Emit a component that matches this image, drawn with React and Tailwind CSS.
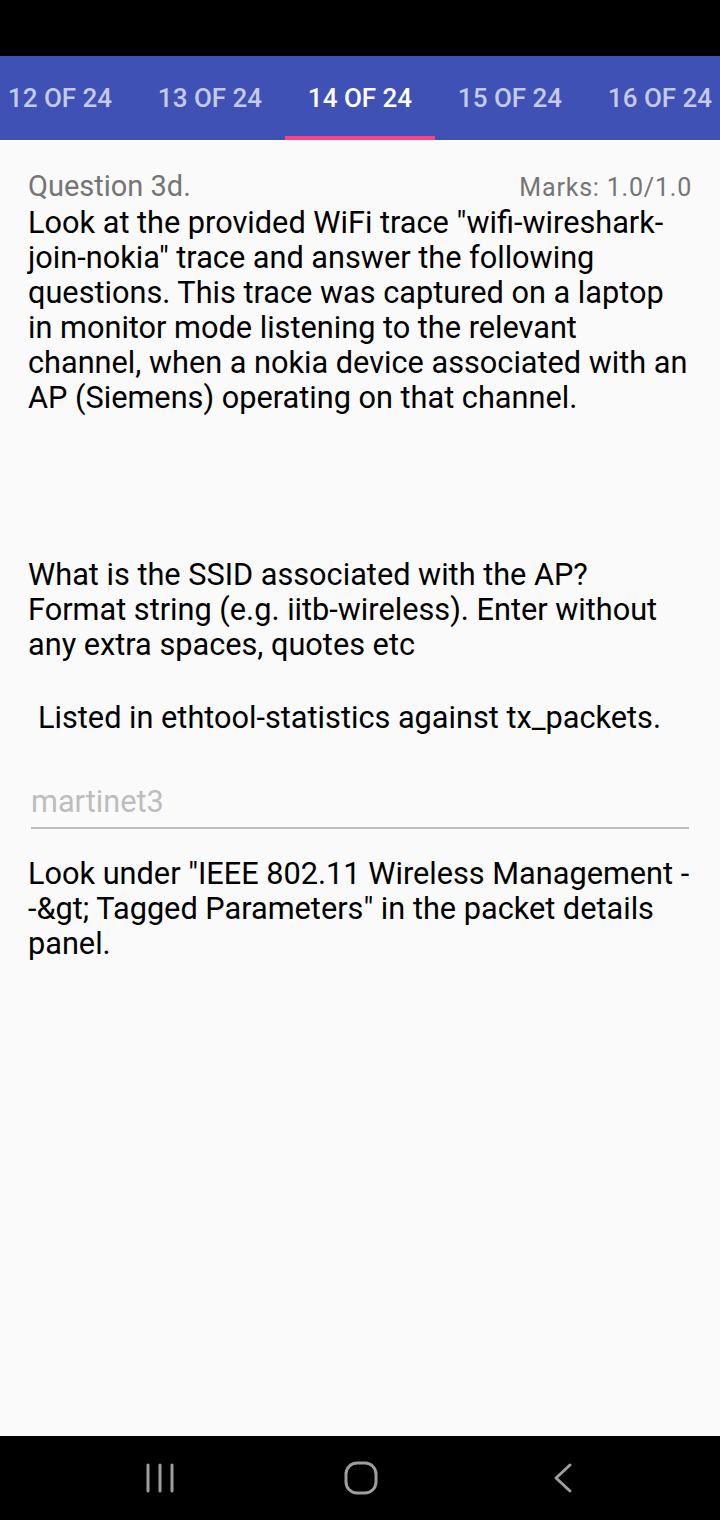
import { useState } from 'react';

const tabs = ['12 OF 24', '13 OF 24', '14 OF 24', '15 OF 24', '16 OF 24'];

export default function App() {
  const [active] = useState(2);

  return (
    <div className="w-[720px] h-[1520px] flex flex-col bg-[#fafafa] overflow-hidden" style={{ fontFamily: 'Roboto, "Noto Sans", sans-serif' }}>
      {/* status bar */}
      <div className="h-[56px] bg-black shrink-0"></div>

      {/* tabs */}
      <div className="h-[84px] bg-[#3f51b5] shrink-0 flex ml-[-15px]">
        {tabs.map((t, i) => (
          <div key={t} className="w-[150px] shrink-0 flex flex-col">
            <div
              className={`flex-1 flex items-center justify-center pt-[4px] text-[26px] font-medium ${
                i === active ? 'text-white' : 'text-[#c5cae9]'
              }`}
            >
              {t}
            </div>
            <div className={`h-[4px] ${i === active ? 'bg-[#ff4081]' : ''}`}></div>
          </div>
        ))}
      </div>

      {/* question body */}
      <div className="flex-1 px-[28px] pt-[30px] text-[30.7px] leading-[35px] text-black">
        <div className="flex justify-between items-baseline leading-[32px] text-[#757575]">
          <span className="text-[29px]">Question 3d.</span>
          <span className="text-[25px] tracking-[0.8px]">Marks: 1.0/1.0</span>
        </div>
        <p className="mt-[1px]">
          Look at the provided WiFi trace "wifi-wireshark-join-nokia" trace and answer the following questions. This
          trace was captured on a laptop in monitor mode listening to the relevant channel, when a nokia device
          associated with an AP (Siemens) operating on that channel.
        </p>

        <p className="mt-[142px]">
          What is the SSID associated with the AP? Format string (e.g. iitb-wireless). Enter without any extra spaces,
          quotes etc
        </p>
        <p className="mt-[38px] pl-[10px]">Listed in ethtool-statistics against tx_packets.</p>

        <div className="mt-[49px] mx-[3px] border-b-2 border-[#bdbdbd] pb-[8px]">
          <span className="text-[#bdbdbd]">martinet3</span>
        </div>

        <p className="mt-[27px]">
          Look under "IEEE 802.11 Wireless Management --&amp;gt; Tagged Parameters" in the packet details panel.
        </p>
      </div>

      {/* nav bar */}
      <div className="h-[84px] bg-black shrink-0 flex items-center pl-[140px] gap-[161px]">
        <svg width="40" height="40" viewBox="0 0 40 40">
          <g stroke="#9e9e9e" strokeWidth="3" strokeLinecap="round">
            <line x1="8" y1="7" x2="8" y2="33" />
            <line x1="20" y1="7" x2="20" y2="33" />
            <line x1="32" y1="7" x2="32" y2="33" />
          </g>
        </svg>
        <svg width="40" height="40" viewBox="0 0 40 40">
          <rect x="5" y="5" width="30" height="30" rx="11" fill="none" stroke="#9e9e9e" strokeWidth="3" />
        </svg>
        <svg width="40" height="40" viewBox="0 0 40 40">
          <polyline points="28,7 14,20 28,33" fill="none" stroke="#9e9e9e" strokeWidth="3" strokeLinecap="round" strokeLinejoin="round" />
        </svg>
      </div>
    </div>
  );
}
